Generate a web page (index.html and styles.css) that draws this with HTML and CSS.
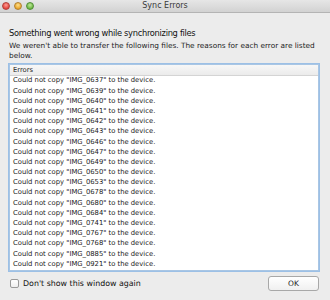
FILE: index.html
```html
<!DOCTYPE html>
<html>
<head>
<meta charset="utf-8">
<link rel="stylesheet" href="styles.css">
</head>
<body>
<div class="window">
  <div class="titlebar">
    <div class="lights">
      <span class="light red"></span>
      <span class="light yellow"></span>
      <span class="light green"></span>
    </div>
    <div class="title">Sync Errors</div>
  </div>
  <div class="content">
    <div class="heading">Something went wrong while synchronizing files</div>
    <div class="desc">We weren't able to transfer the following files. The reasons for each error are listed below.</div>
    <div class="list">
      <div class="list-header">Errors</div>
      <div class="rows">
        <div class="row">Could not copy "IMG_0637" to the device.</div>
        <div class="row">Could not copy "IMG_0639" to the device.</div>
        <div class="row">Could not copy "IMG_0640" to the device.</div>
        <div class="row">Could not copy "IMG_0641" to the device.</div>
        <div class="row">Could not copy "IMG_0642" to the device.</div>
        <div class="row">Could not copy "IMG_0643" to the device.</div>
        <div class="row">Could not copy "IMG_0646" to the device.</div>
        <div class="row">Could not copy "IMG_0647" to the device.</div>
        <div class="row">Could not copy "IMG_0649" to the device.</div>
        <div class="row">Could not copy "IMG_0650" to the device.</div>
        <div class="row">Could not copy "IMG_0653" to the device.</div>
        <div class="row">Could not copy "IMG_0678" to the device.</div>
        <div class="row">Could not copy "IMG_0680" to the device.</div>
        <div class="row">Could not copy "IMG_0684" to the device.</div>
        <div class="row">Could not copy "IMG_0741" to the device.</div>
        <div class="row">Could not copy "IMG_0767" to the device.</div>
        <div class="row">Could not copy "IMG_0768" to the device.</div>
        <div class="row">Could not copy "IMG_0885" to the device.</div>
        <div class="row">Could not copy "IMG_0921" to the device.</div>
      </div>
    </div>
    <div class="footer">
      <label class="check"><span class="box"></span><span>Don't show this window again</span></label>
      <div class="button">OK</div>
    </div>
  </div>
</div>
</body>
</html>
```
FILE: styles.css
```css
html, body {
  margin: 0;
  padding: 0;
  background: #ececec;
}
.window {
  width: 330px;
  height: 300px;
  background: #ececec;
  font-family: "DejaVu Sans", sans-serif;
  color: #1a1a1a;
  display: flex;
  flex-direction: column;
  overflow: hidden;
}
.titlebar {
  height: 12px;
  background: linear-gradient(#e6e6e6, #d2d2d2);
  border-bottom: 1px solid #b4b4b4;
  position: relative;
  display: flex;
  align-items: center;
  justify-content: center;
}
.lights {
  position: absolute;
  left: 2px;
  top: 2px;
  display: flex;
  gap: 4px;
}
.light {
  width: 8px;
  height: 8px;
  border-radius: 50%;
  box-sizing: border-box;
}
.red { background: radial-gradient(circle at 50% 35%, #ff9c94, #e4453c 70%); border: 0.5px solid #b0403a; }
.yellow { background: radial-gradient(circle at 50% 35%, #ffe08a, #e9a52a 70%); border: 0.5px solid #b08030; }
.green { background: radial-gradient(circle at 50% 35%, #bfe89a, #6eb843 70%); border: 0.5px solid #4f8d36; }
.title {
  font-size: 8px;
  color: #3a3a3a;
  line-height: 12px;
}
.content {
  flex: 1;
  display: flex;
  flex-direction: column;
  padding: 0 10px 0 9px;
}
.heading {
  font-size: 8.3px;
  letter-spacing: -0.3px;
  margin-top: 14px;
  line-height: 12px;
  color: #111;
}
.desc {
  font-size: 7.35px;
  line-height: 10.2px;
  margin-top: 2px;
  color: #222;
}
.list {
  margin-top: 3px;
  margin-right: 1px;
  height: 205px;
  background: #fff;
  border: 1px solid #a9c6e4;
  box-shadow: 0 0 0 1px #9cc0e6;
  display: flex;
  flex-direction: column;
  overflow: hidden;
}
.list-header {
  height: 10px;
  line-height: 10px;
  font-size: 6.8px;
  padding-left: 3px;
  background: linear-gradient(#f7f7f7, #ebebeb);
  border-bottom: 1px solid #d4d4d4;
  color: #222;
}
.rows {
  margin-top: -1px;
}
.row {
  height: 10.2px;
  line-height: 10.2px;
  font-size: 6.8px;
  padding-left: 3px;
  white-space: nowrap;
  color: #1a1a1a;
}
.footer {
  margin-top: 5px;
  margin-right: 1px;
  display: flex;
  align-items: center;
  justify-content: space-between;
}
.check {
  display: flex;
  align-items: center;
  gap: 4px;
  font-size: 7.9px;
  color: #111;
  margin-left: 1px;
}
.box {
  width: 7px;
  height: 7px;
  border: 1px solid #9a9a9a;
  border-radius: 2px;
  background: linear-gradient(#ffffff, #efefef);
}
.button {
  width: 49px;
  height: 13px;
  line-height: 13px;
  text-align: center;
  font-size: 7.5px;
  border: 1px solid #a8a8a8;
  border-radius: 3px;
  background: linear-gradient(#ffffff, #f0f0f0);
  color: #222;
}
```
